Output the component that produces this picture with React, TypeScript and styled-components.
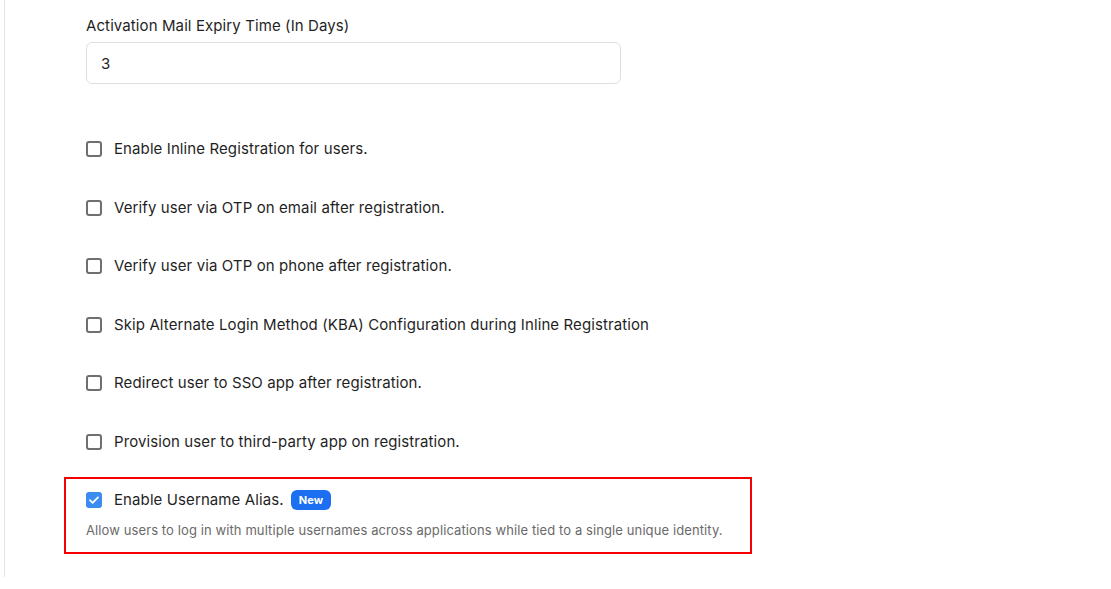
import React from 'react';
import styled, { createGlobalStyle } from 'styled-components';

const Global = createGlobalStyle`
  body {
    margin: 0;
    background: #fff;
    font-family: Inter, "Noto Sans", sans-serif;
    color: #1f1f1f;
    letter-spacing: 0.1px;
  }
`;

const Panel = styled.section`
  margin-left: 4px;
  height: 577px;
  border-left: 1px solid #e3e3e3;
  box-sizing: border-box;
  padding: 16px 0 0 81px;
  width: 700px;
`;

const Field = styled.div`
  display: flex;
  flex-direction: column;
  gap: 6px;
  width: 535px;
`;

const Label = styled.label`
  font-size: 15px;
  line-height: 20px;
`;

const Input = styled.input`
  height: 42px;
  box-sizing: border-box;
  border: 1px solid #dcdfe4;
  border-radius: 6px;
  padding: 0 14px;
  font: inherit;
  font-size: 15px;
  color: #1f1f1f;
  outline: none;
`;

const Options = styled.div`
  display: flex;
  flex-direction: column;
  gap: 38.5px;
  margin-top: 55px;
`;

const Row = styled.label`
  display: flex;
  align-items: center;
  gap: 12px;
  font-size: 15px;
  line-height: 20px;
  cursor: pointer;
`;

const Box = styled.span<{ $on?: boolean }>`
  width: 16px;
  height: 16px;
  box-sizing: border-box;
  border-radius: 3px;
  border: ${p => (p.$on ? 'none' : '2px solid #6f6f6f')};
  background: ${p => (p.$on ? '#3b8cf0' : '#fff')};
  display: inline-flex;
  align-items: center;
  justify-content: center;
  flex: none;
`;

const Highlight = styled.div`
  margin: -13px 0 0 -22px;
  width: 688px;
  box-sizing: border-box;
  border: 2px solid #f40000;
  padding: 11px 20px 13px 20px;
  display: flex;
  flex-direction: column;
  gap: 11px;
`;

const Badge = styled.span`
  background: #1b6ff0;
  color: #fff;
  font-size: 11px;
  font-weight: 700;
  line-height: 20px;
  padding: 0 8px;
  border-radius: 6px;
  margin-left: -5px;
`;

const Hint = styled.p`
  margin: 0;
  font-size: 13px;
  line-height: 18px;
  color: #6a6a6a;
`;

const options = [
  'Enable Inline Registration for users.',
  'Verify user via OTP on email after registration.',
  'Verify user via OTP on phone after registration.',
  'Skip Alternate Login Method (KBA) Configuration during Inline Registration',
  'Redirect user to SSO app after registration.',
  'Provision user to third-party app on registration.',
];

const Check = () => (
  <svg width="12" height="12" viewBox="0 0 12 12" fill="none">
    <path d="M2 6.2l2.6 2.6L10 3.4" stroke="#fff" strokeWidth="1.8" strokeLinecap="round" strokeLinejoin="round" />
  </svg>
);

export default function App() {
  return (
    <>
      <Global />
      <Panel>
        <Field>
          <Label>Activation Mail Expiry Time (In Days)</Label>
          <Input defaultValue="3" />
        </Field>
        <Options>
          {options.map(o => (
            <Row key={o}>
              <Box />
              {o}
            </Row>
          ))}
          <Highlight>
            <Row>
              <Box $on><Check /></Box>
              Enable Username Alias.
              <Badge>New</Badge>
            </Row>
            <Hint>Allow users to log in with multiple usernames across applications while tied to a single unique identity.</Hint>
          </Highlight>
        </Options>
      </Panel>
    </>
  );
}
